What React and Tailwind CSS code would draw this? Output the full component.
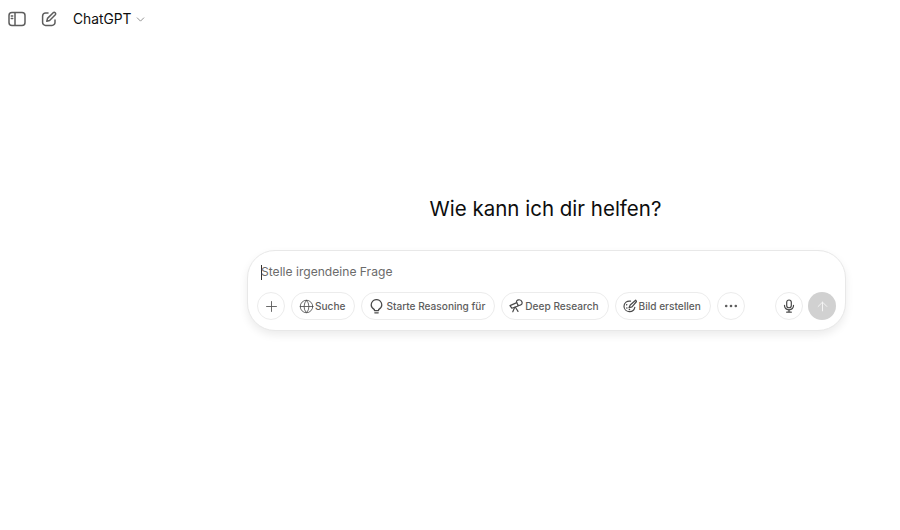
import React from "react";
import { ChevronDown, Plus, Globe, ArrowUp } from "lucide-react";

function Sidebar() {
  return (
    <svg width="18" height="16" viewBox="0 0 18 16" fill="none" stroke="#5d5d5d" strokeWidth="1.5">
      <rect x="1" y="1.5" width="16" height="13" rx="3" />
      <path d="M7 1.5v13" />
      <path d="M3.3 5h1.4M3.3 7.6h1.4" strokeLinecap="round" />
    </svg>
  );
}

function Compose() {
  return (
    <svg width="16" height="16" viewBox="0 0 16 16" fill="none" stroke="#5d5d5d" strokeWidth="1.5" strokeLinecap="round" strokeLinejoin="round">
      <path d="M7 2H4.6A3 3 0 0 0 1.6 5v6.4a3 3 0 0 0 3 3H11a3 3 0 0 0 3-3V9" />
      <path d="M12.2 1.7a1.5 1.5 0 0 1 2.1 2.1L8.6 9.5 5.8 10.2l.7-2.8z" />
    </svg>
  );
}

function Bulb() {
  return (
    <svg width="15" height="15" viewBox="-1 0 15 15" fill="none" stroke="#4a4a4a" strokeWidth="1.25" strokeLinecap="round" strokeLinejoin="round">
      <path d="M4.4 10.6C3 9.7 1.2 8.4 1.2 5.9a5.3 5.3 0 0 1 10.6 0c0 2.5-1.8 3.8-3.2 4.7v1H4.4z" />
      <path d="M4.8 13.8h3.4" />
    </svg>
  );
}

function Telescope() {
  return (
    <svg width="14" height="14" viewBox="0 0 14 14" fill="none" stroke="#4a4a4a" strokeWidth="1.2" strokeLinejoin="round" strokeLinecap="round">
      <path d="M1 6.6l6.8-3 1.4 3.4-6.4 2.2z" />
      <path d="M7.6 3.4c-.4-1.4.6-2.4 2-2.6 1.6-.2 3 .8 3.4 2.2.4 1.4-.4 2.8-1.8 3.2-.8.2-1.4.2-2 0" />
      <path d="M5.6 8.4l-1.8 4.4M6.4 8.2l2.6 4.2" />
    </svg>
  );
}

function Brush() {
  return (
    <svg width="14" height="14" viewBox="0 0 14 14" fill="none" stroke="#4a4a4a" strokeWidth="1.2" strokeLinejoin="round" strokeLinecap="round">
      <path d="M7.6 2.2C4.2 1.4 1 3.8 1 7.2c0 2.8 2.2 5.2 5.2 5.4 2.8.2 5-1.6 5.6-4.2" />
      <path d="M12.6 1.2L7.2 6 6 8.8l3-.9 4.6-5.4z" />
      <path d="M3.6 5.8h.1M3.8 9h.1M6.4 10.4h.1" strokeWidth="1.5" />
    </svg>
  );
}

function Mic() {
  return (
    <svg width="12" height="14" viewBox="0 0 13 15" fill="none" stroke="#4a4a4a" strokeWidth="1.3" strokeLinecap="round" strokeLinejoin="round">
      <rect x="4" y="1" width="5" height="8.4" rx="2.5" />
      <path d="M1.6 6.8c0 3 2 4.8 4.9 4.8s4.9-1.8 4.9-4.8" />
      <path d="M6.5 11.6v2.6M4 14.2h5" />
    </svg>
  );
}

function Dots() {
  return (
    <svg width="14" height="4" viewBox="0 0 14 4" fill="#5d5d5d">
      <circle cx="2.2" cy="2" r="1.3" />
      <circle cx="7" cy="2" r="1.3" />
      <circle cx="11.8" cy="2" r="1.3" />
    </svg>
  );
}

function Pill({ icon, label }) {
  return (
    <button className="h-[28px] shrink-0 flex items-center gap-[2px] pl-[7px] pr-[9px] rounded-full border border-[#ececec] bg-white text-[10.1px] font-medium text-[#5d5d5d] whitespace-nowrap">
      {icon}
      <span className="mt-[1px]">{label}</span>
    </button>
  );
}

export default function App() {
  return (
    <div className="w-[900px] h-[530px] bg-white flex flex-col overflow-hidden" style={{ fontFamily: "Inter, 'Liberation Sans', sans-serif" }}>
      <header className="h-[38px] flex items-center pl-[8px] shrink-0">
        <Sidebar />
        <span className="ml-[15px]"><Compose /></span>
        <span className="ml-[16px] text-[13.8px] text-[#0d0d0d]">ChatGPT</span>
        <ChevronDown size={13} stroke="#7a7a7a" strokeWidth={1.5} className="ml-[2px]" />
      </header>
      <main className="flex flex-col items-center pl-[247px] pr-[54px] pt-[157px]">
        <h1 className="text-[20.5px] leading-[27px] font-normal text-[#0d0d0d] mr-[2px]">Wie kann ich dir helfen?</h1>
        <div className="mt-[28px] w-full h-[81px] rounded-[28px] border border-[#e8e8e8] bg-white shadow-[0_4px_8px_rgba(0,0,0,0.08)] px-[9px] flex flex-col">
          <div className="h-[41px] pl-[4px] pt-[1px] flex items-center text-[#6b6b6b] text-[12.1px]">
            <span className="w-px h-[15px] bg-[#333] -mr-px" />
            <span>Stelle irgendeine Frage</span>
          </div>
          <div className="flex items-center gap-[6px]">
            <button className="w-[28px] h-[28px] shrink-0 rounded-full border border-[#ececec] flex items-center justify-center">
              <Plus size={17} stroke="#5d5d5d" strokeWidth={1.3} />
            </button>
            <Pill icon={<span className="w-[14px] flex justify-center"><Globe size={15} stroke="#4a4a4a" strokeWidth={1.3} className="shrink-0" /></span>} label="Suche" />
            <Pill icon={<Bulb />} label="Starte Reasoning für" />
            <Pill icon={<Telescope />} label="Deep Research" />
            <Pill icon={<Brush />} label="Bild erstellen" />
            <button className="w-[28px] h-[28px] shrink-0 rounded-full border border-[#ececec] flex items-center justify-center">
              <Dots />
            </button>
            <div className="ml-auto flex items-center gap-[5px]">
              <button className="w-[28px] h-[28px] shrink-0 rounded-full border border-[#ececec] flex items-center justify-center">
                <Mic />
              </button>
              <button className="w-[28px] h-[28px] shrink-0 rounded-full bg-[#d1d1d1] flex items-center justify-center">
                <ArrowUp size={15} stroke="#f4f4f4" strokeWidth={1.6} />
              </button>
            </div>
          </div>
        </div>
      </main>
    </div>
  );
}
